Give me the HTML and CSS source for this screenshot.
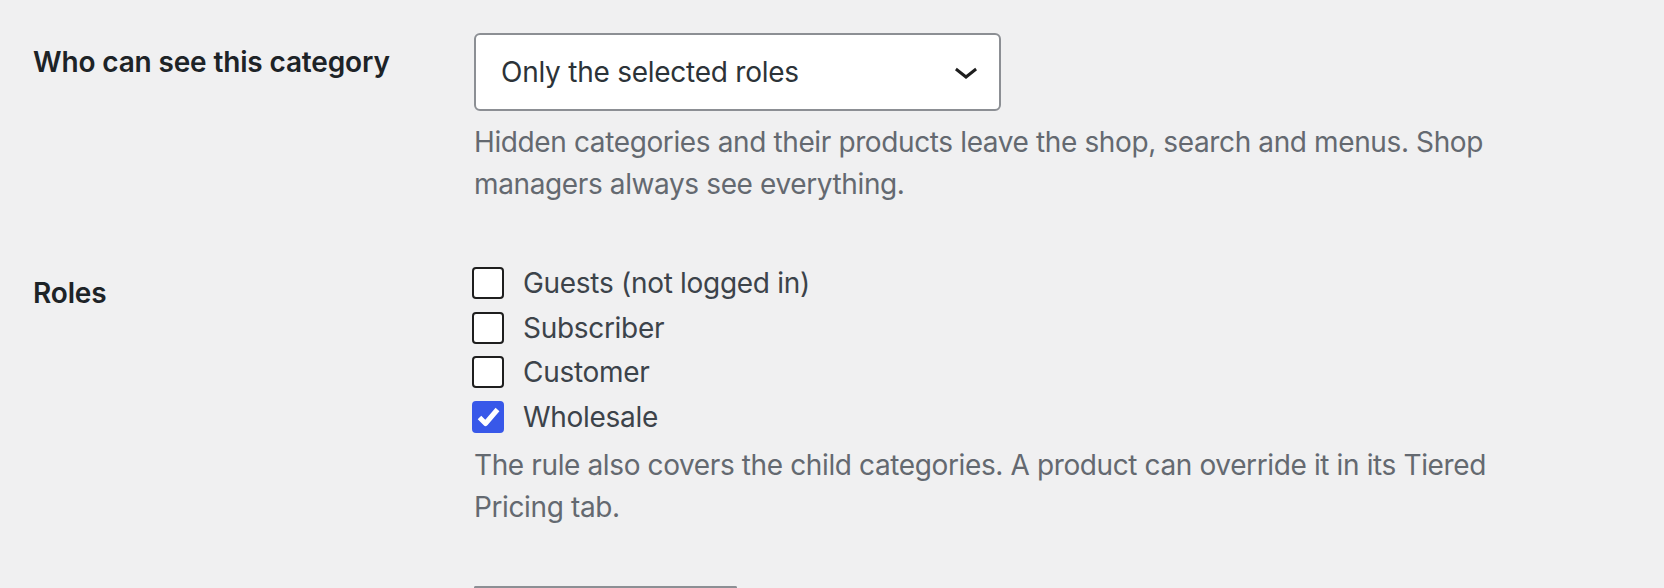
FILE: index.html
```html
<!DOCTYPE html>
<html lang="en">
<head>
  <meta charset="UTF-8">
  <meta name="viewport" content="width=device-width, initial-scale=1.0">
  <title>Category visibility</title>
  <link rel="stylesheet" href="styles.css">
</head>
<body>
  <div class="form-table">
    <div class="row row-visibility">
      <div class="th"><label for="visibility">Who can see this category</label></div>
      <div class="td">
        <div class="select" id="visibility">
          <span>Only the selected roles</span>
          <svg class="chevron" width="48" height="48" viewBox="0 0 24 24"><path d="M17.5 11.6L12 16l-5.5-4.4.9-1.2L12 14l4.6-3.6z"/></svg>
        </div>
        <p class="description">Hidden categories and their products leave the shop, search and menus. Shop managers always see everything.</p>
      </div>
    </div>
    <div class="row row-roles">
      <div class="th"><span class="th-label">Roles</span></div>
      <div class="td">
        <div class="checks">
          <label class="check"><span class="box"></span>Guests (not logged in)</label>
          <label class="check"><span class="box"></span>Subscriber</label>
          <label class="check"><span class="box"></span>Customer</label>
          <label class="check"><span class="box checked"><svg width="32" height="32" viewBox="0 0 32 32"><path d="M7.5 16.5l6 6L25.5 8.5"/></svg></span>Wholesale</label>
        </div>
        <p class="description">The rule also covers the child categories. A product can override it in its Tiered Pricing tab.</p>
        <div class="next-field"></div>
      </div>
    </div>
  </div>
</body>
</html>
```

FILE: styles.css
```css
body {
  margin: 0;
  background-color: #f0f0f1;
  font-family: Inter, "Noto Sans", sans-serif;
  font-size: 28px;
  color: #3c434a;
}

.form-table {
  padding-left: 33px;
}

.row {
  display: grid;
  grid-template-columns: 441px 1090px;
}

.th label,
.th-label {
  display: block;
  font-weight: 600;
  color: #1d2327;
  line-height: 36px;
  letter-spacing: -0.15px;
}

.row-visibility .th {
  padding-top: 44px;
}

.row-visibility .td {
  padding-top: 33px;
}

.row-roles .th {
  padding-top: 70px;
}

.row-roles .td {
  padding-top: 56px;
}

.select {
  box-sizing: border-box;
  width: 527px;
  height: 78px;
  border: 2px solid #8c8f94;
  border-radius: 6px;
  background-color: #fff;
  display: flex;
  align-items: center;
  justify-content: space-between;
  padding: 0 9px 0 25px;
  color: #2c3338;
  letter-spacing: -0.25px;
}

.chevron {
  fill: #1e1e1e;
  margin-top: -2px;
}

.description {
  margin: 10px 0 0;
  color: #646970;
  line-height: 42px;
  letter-spacing: -0.38px;
}

.checks {
  display: flex;
  flex-direction: column;
  margin-left: -2px;
}

.check {
  display: flex;
  align-items: center;
  height: 44.5px;
  gap: 19px;
  color: #3c434a;
  letter-spacing: -0.3px;
}

.box {
  box-sizing: border-box;
  width: 32px;
  height: 32px;
  border: 2px solid #1e1e1e;
  border-radius: 4px;
  background-color: #fff;
  flex-shrink: 0;
}

.box.checked {
  border-color: #3858e9;
  background-color: #3858e9;
  position: relative;
}

.box.checked svg {
  position: absolute;
  left: -2px;
  top: -2px;
  fill: none;
  stroke: #fff;
  stroke-width: 5;
  stroke-linejoin: round;
}

.row-roles .description {
  margin-top: 5px;
}

.next-field {
  box-sizing: border-box;
  width: 263px;
  height: 2px;
  margin-top: 58px;
  border: 2px solid #8c8f94;
  border-bottom: none;
  border-radius: 6px 6px 0 0;
}
```
